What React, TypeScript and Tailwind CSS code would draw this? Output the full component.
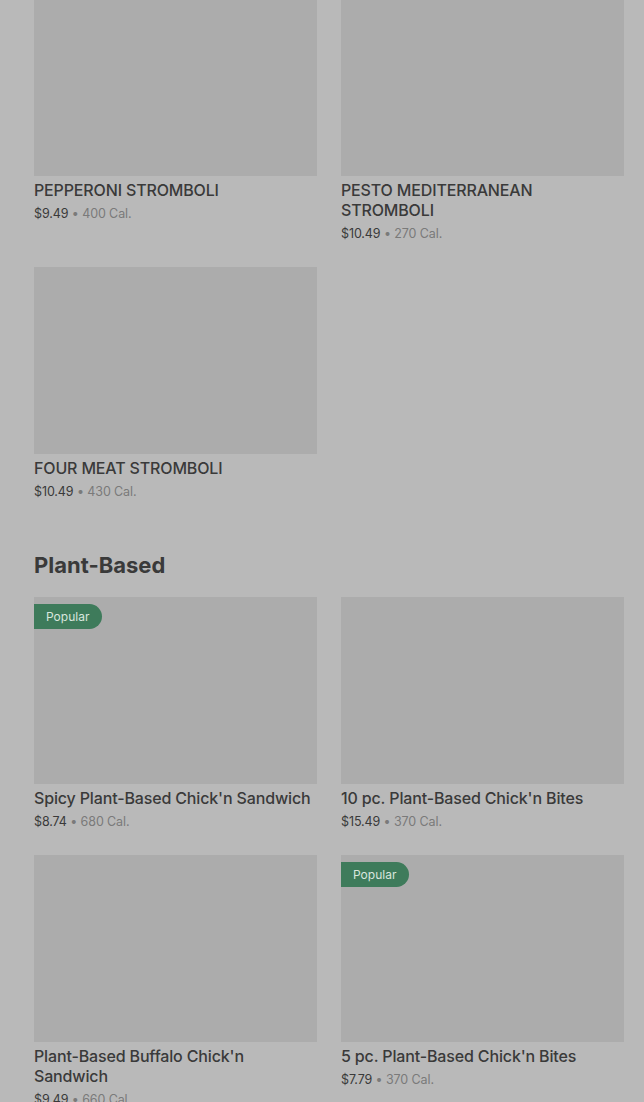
type Item = { name: string; price: string; cal: string; popular?: boolean };

const stromboli: Item[] = [
  { name: 'PEPPERONI STROMBOLI', price: '$9.49', cal: '400 Cal.' },
  { name: 'PESTO MEDITERRANEAN STROMBOLI', price: '$10.49', cal: '270 Cal.' },
  { name: 'FOUR MEAT STROMBOLI', price: '$10.49', cal: '430 Cal.' },
];

const plantBased: Item[] = [
  { name: "Spicy Plant-Based Chick'n Sandwich", price: '$8.74', cal: '680 Cal.', popular: true },
  { name: "10 pc. Plant-Based Chick'n Bites", price: '$15.49', cal: '370 Cal.' },
  { name: "Plant-Based Buffalo Chick'n Sandwich", price: '$9.49', cal: '660 Cal.' },
  { name: "5 pc. Plant-Based Chick'n Bites", price: '$7.79', cal: '370 Cal.', popular: true },
];

function Card({ item, first }: { item: Item; first?: boolean }) {
  return (
    <div className="flex flex-col">
      <div className={`relative w-full bg-[#acacac] ${first ? 'h-[176px]' : 'h-[187px]'}`}>
        {item.popular && (
          <span className="absolute left-0 top-[7px] h-[25px] pl-3 pr-[13px] flex items-center rounded-r-full bg-[#3e7b5b] text-[12px] text-[#d9e6de]">
            Popular
          </span>
        )}
      </div>
      <div className="mt-[4px] text-[16px] leading-[20px] font-medium tracking-[-0.15px] text-[#3a3a3a]">{item.name}</div>
      <div className="mt-[4px] text-[12.5px] leading-[20px] tracking-[-0.1px]">
        <span className="text-[#3a3a3a]">{item.price}</span>
        <span className="text-[#7a7a7a]"> • {item.cal}</span>
      </div>
    </div>
  );
}

export default function App() {
  return (
    <div className="min-h-[1102px] bg-[#b9b9b9] pl-[34px] pr-[20px]" style={{ fontFamily: 'Inter, "Noto Sans", sans-serif' }}>
      <div className="grid grid-cols-2 gap-x-[24px] gap-y-[23px]">
        {stromboli.map((it, i) => (
          <Card key={it.name} item={it} first={i < 2} />
        ))}
      </div>

      <h2 className="mt-[48px] text-[22px] leading-[30px] font-bold text-[#3a3a3a]">Plant-Based</h2>

      <div className="mt-[17px] grid grid-cols-2 gap-x-[24px] gap-y-[23px]">
        {plantBased.map((it) => (
          <Card key={it.name} item={it} />
        ))}
      </div>
    </div>
  );
}
